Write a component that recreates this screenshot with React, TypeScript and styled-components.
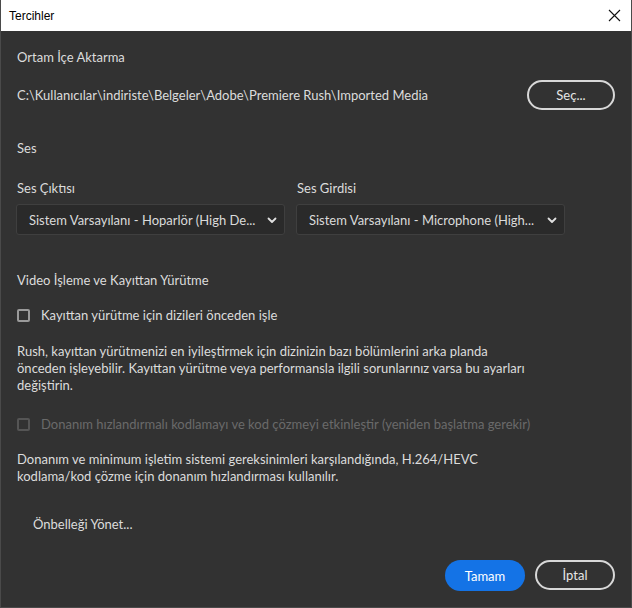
import { FC } from 'react'
import styled, { createGlobalStyle } from 'styled-components'

const GlobalStyle = createGlobalStyle`
  html, body {
    margin: 0;
    padding: 0;
    background: #323232;
  }
  * {
    box-sizing: border-box;
  }
`

const font = `Lato, 'Open Sans', sans-serif`

const Window = styled('div')({
  width: 632,
  height: 608,
  display: 'flex',
  flexDirection: 'column',
  background: '#323232',
  borderLeft: '1px solid #4a4a4a',
  borderRight: '1px solid #4a4a4a',
  borderBottom: '1px solid #4a4a4a',
  overflow: 'hidden',
})

const TitleBar = styled('div')({
  height: 31,
  flexShrink: 0,
  background: '#ffffff',
  display: 'flex',
  alignItems: 'center',
  justifyContent: 'space-between',
  paddingLeft: 8,
  paddingRight: 8,
  fontFamily: `'Liberation Sans', sans-serif`,
  fontSize: 12,
  color: '#000',
})

const CloseButton = styled('div')({
  width: 18,
  height: 18,
  display: 'flex',
  alignItems: 'center',
  justifyContent: 'center',
})

const Body = styled('div')({
  flex: 1,
  display: 'flex',
  flexDirection: 'column',
  padding: '17px 16px 16px 15px',
  fontFamily: font,
  fontSize: 13,
  color: '#dcdcdc',
})

const Heading = styled('div')<{ $top?: number }>(({ $top = 0 }) => ({
  marginTop: $top,
  paddingLeft: 1,
  lineHeight: '18px',
}))

const PathRow = styled('div')({
  marginTop: 14,
  display: 'flex',
  alignItems: 'center',
  justifyContent: 'space-between',
  paddingLeft: 1,
})

const OutlineButton = styled('button')<{ $width: number }>(({ $width }) => ({
  width: $width,
  height: 30,
  borderRadius: 15,
  border: '2px solid #d8d8d8',
  background: 'transparent',
  color: '#e6e6e6',
  fontFamily: font,
  fontSize: 13,
  padding: 0,
}))

const PrimaryButton = styled('button')({
  width: 80,
  height: 31,
  borderRadius: 16,
  border: 'none',
  background: '#1473e6',
  color: '#ffffff',
  fontFamily: font,
  fontSize: 13,
  padding: 0,
})

const SelectGrid = styled('div')({
  marginTop: 23,
  display: 'grid',
  gridTemplateColumns: '269px 269px',
  columnGap: 11,
  rowGap: 8,
})

const Label = styled('div')({
  paddingLeft: 1,
  lineHeight: '16px',
})

const Select = styled('div')({
  height: 31,
  display: 'flex',
  alignItems: 'center',
  justifyContent: 'space-between',
  padding: '0 6px 0 12px',
  background: '#2a2a2a',
  border: '1px solid #3f3f3f',
  borderRadius: 3,
  color: '#dadada',
})

const CheckRow = styled('div')<{ $disabled?: boolean; $top: number }>(({ $disabled, $top }) => ({
  marginTop: $top,
  display: 'flex',
  alignItems: 'center',
  gap: 11,
  paddingLeft: 1,
  color: $disabled ? '#6a6a6a' : '#dcdcdc',
}))

const Box = styled('span')<{ $disabled?: boolean }>(({ $disabled }) => ({
  width: 13,
  height: 13,
  border: `2px solid ${$disabled ? '#555' : '#9a9a9a'}`,
  borderRadius: 2,
  flexShrink: 0,
}))

const Paragraph = styled('p')<{ $top: number }>(({ $top }) => ({
  margin: 0,
  marginTop: $top,
  paddingLeft: 1,
  lineHeight: '17px',
}))

const QuietButton = styled('div')({
  marginTop: 30,
  paddingLeft: 17,
  lineHeight: '18px',
})

const Footer = styled('div')({
  marginTop: 'auto',
  display: 'flex',
  justifyContent: 'flex-end',
  gap: 10,
})

const Chevron: FC = () => (
  <svg width='12' height='12' viewBox='0 0 12 12'>
    <path d='M2.5 4.5 L6 8 L9.5 4.5' fill='none' stroke='#e0e0e0' strokeWidth='1.8' strokeLinecap='round' strokeLinejoin='round' />
  </svg>
)

export default function App() {
  return (
    <>
      <GlobalStyle />
      <Window>
        <TitleBar>
          <span>Tercihler</span>
          <CloseButton>
            <svg width='13' height='13' viewBox='0 0 13 13'>
              <path d='M1 1 L12 12 M12 1 L1 12' stroke='#111' strokeWidth='1.1' />
            </svg>
          </CloseButton>
        </TitleBar>
        <Body>
          <Heading>Ortam İçe Aktarma</Heading>
          <PathRow>
            <span>C:\Kullanıcılar\indiriste\Belgeler\Adobe\Premiere Rush\Imported Media</span>
            <OutlineButton $width={88}>Seç...</OutlineButton>
          </PathRow>
          <Heading $top={29}>Ses</Heading>
          <SelectGrid>
            <Label>Ses Çıktısı</Label>
            <Label>Ses Girdisi</Label>
            <Select>
              <span>Sistem Varsayılanı - Hoparlör (High De...</span>
              <Chevron />
            </Select>
            <Select>
              <span>Sistem Varsayılanı - Microphone (High...</span>
              <Chevron />
            </Select>
          </SelectGrid>
          <Heading $top={36}>Video İşleme ve Kayıttan Yürütme</Heading>
          <CheckRow $top={18}>
            <Box />
            <span>Kayıttan yürütme için dizileri önceden işle</span>
          </CheckRow>
          <Paragraph $top={20}>
            Rush, kayıttan yürütmenizi en iyileştirmek için dizinizin bazı bölümlerini arka planda
            <br />
            önceden işleyebilir. Kayıttan yürütme veya performansla ilgili sorunlarınız varsa bu ayarları
            <br />
            değiştirin.
          </Paragraph>
          <CheckRow $top={22} $disabled>
            <Box $disabled />
            <span>Donanım hızlandırmalı kodlamayı ve kod çözmeyi etkinleştir (yeniden başlatma gerekir)</span>
          </CheckRow>
          <Paragraph $top={19}>
            Donanım ve minimum işletim sistemi gereksinimleri karşılandığında, H.264/HEVC
            <br />
            kodlama/kod çözme için donanım hızlandırması kullanılır.
          </Paragraph>
          <QuietButton>Önbelleği Yönet...</QuietButton>
          <Footer>
            <PrimaryButton>Tamam</PrimaryButton>
            <OutlineButton $width={80}>İptal</OutlineButton>
          </Footer>
        </Body>
      </Window>
    </>
  )
}
